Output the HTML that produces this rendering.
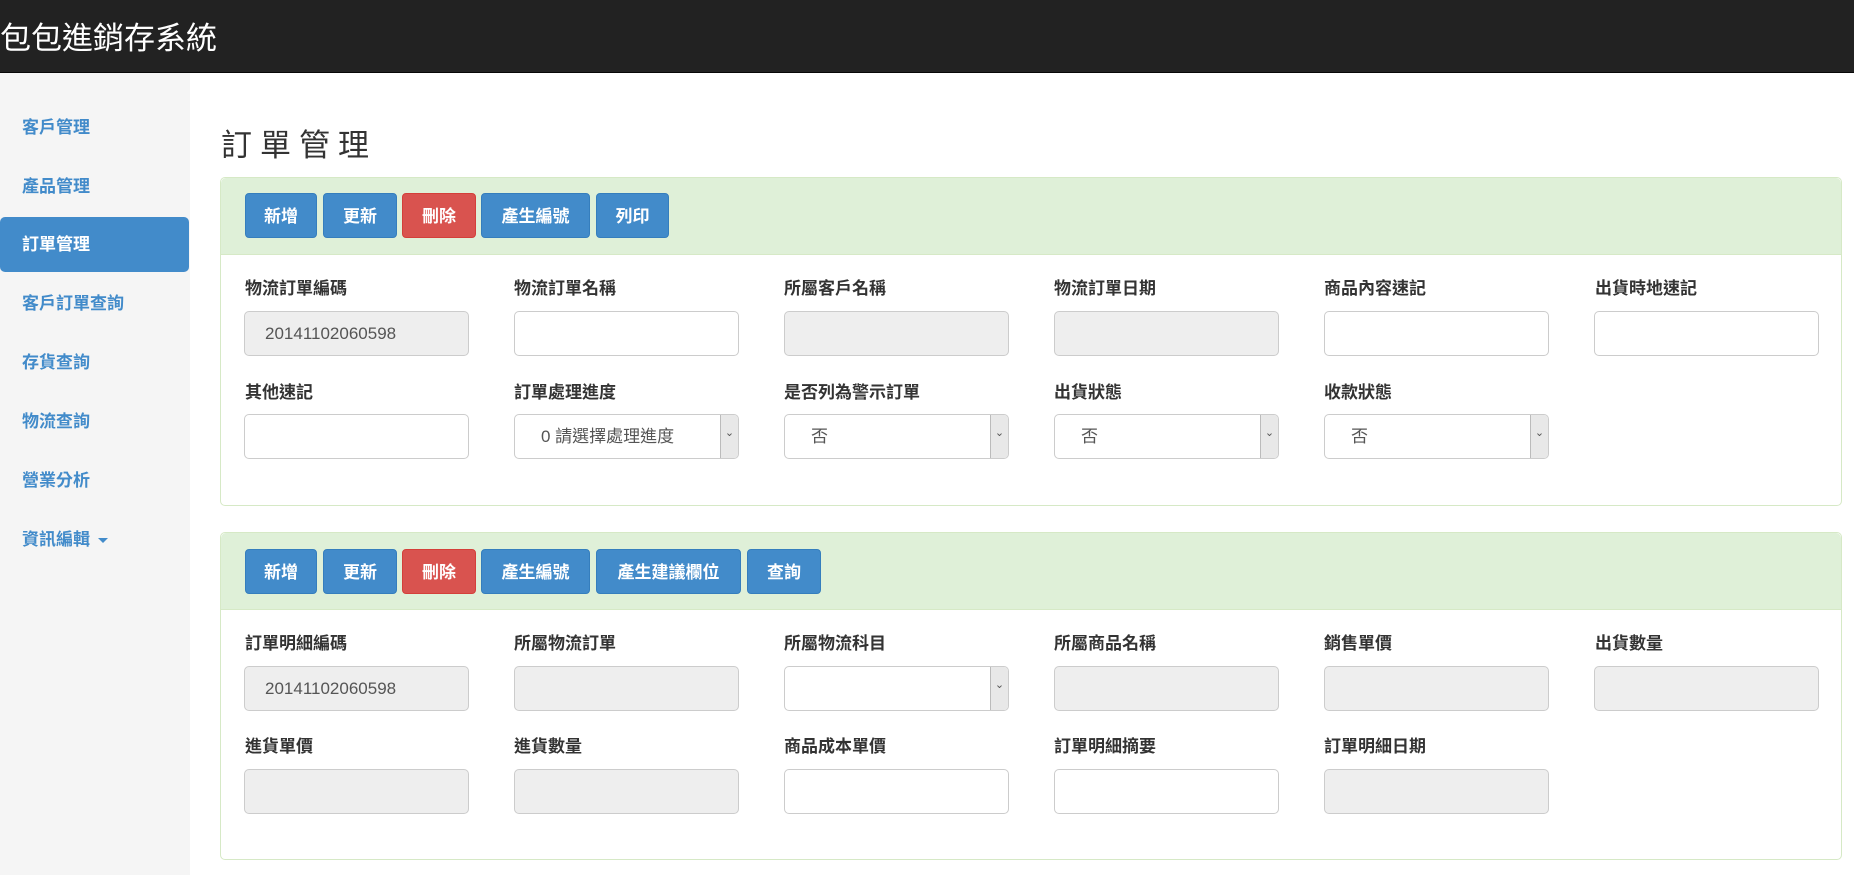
<!DOCTYPE html>
<html><head><meta charset="utf-8"><style>
*{box-sizing:border-box;margin:0;padding:0}
body{width:1854px;height:875px;overflow:hidden;background:#fff;font-family:"Liberation Sans","Noto Sans CJK TC",sans-serif;position:relative}
.nav{position:absolute;left:0;top:0;width:1854px;height:73px;background:#222;border-bottom:1px solid #080808}
.nav span{position:absolute;left:0;top:19px;color:#fff;font-size:31px;line-height:40px}
.side{position:absolute;left:0;top:73px;width:190px;height:802px;background:#f5f5f5}
.side a{position:absolute;left:0;width:189px;height:55px;line-height:55px;padding-left:22px;color:#428bca;font-size:17px;font-weight:bold;border-radius:5px}
.side a.act{background:#428bca;color:#fff}
.caret{display:inline-block;width:0;height:0;border-left:5px solid transparent;border-right:5px solid transparent;border-top:5px solid #428bca;margin-left:8px;vertical-align:middle}
h1{position:absolute;left:221px;top:126px;font-size:31px;font-weight:normal;letter-spacing:8px;color:#333;line-height:40px}
.panel{position:absolute;left:220px;width:1622px;border:1px solid #d6e9c6;border-radius:5px;background:#fff}
.ph{height:77px;background:#dff0d8;border-bottom:1px solid #d6e9c6;border-radius:5px 5px 0 0}
.btn{position:absolute;height:45px;line-height:45px;text-align:center;color:#fff;font-size:17px;font-weight:bold;background:#428bca;border:1px solid #357ebd;border-radius:4px}
.btn.r{background:#d9534f;border-color:#d43f3a}
.lbl{position:absolute;font-size:17px;font-weight:bold;color:#333;line-height:20px}
.in{position:absolute;width:225px;height:45px;border:1px solid #ccc;border-radius:5px;background:#fff;font-size:17px;color:#555;line-height:43px;padding-left:26px}
.in.d{background:#eee}
.in.s:after{content:"⌄";position:absolute;right:0;top:0;width:17px;height:43px;background:#e8e8e8;border-left:1px solid #bbb;font-size:11px;text-align:center;line-height:36px;color:#555;border-radius:0 4px 4px 0}
</style></head><body>
<div class="nav"><span>包包進銷存系統</span></div>
<div class="side">
<a style="top:27px">客戶管理</a>
<a style="top:86px">產品管理</a>
<a class="act" style="top:144px">訂單管理</a>
<a style="top:203px">客戶訂單查詢</a>
<a style="top:262px">存貨查詢</a>
<a style="top:321px">物流查詢</a>
<a style="top:380px">營業分析</a>
<a style="top:439px">資訊編輯<span class="caret"></span></a>
</div>
<h1>訂單管理</h1>

<div class="panel" style="top:177px;height:329px"><div class="ph"></div></div>
<div class="btn" style="left:245px;top:193px;width:72px">新增</div>
<div class="btn" style="left:323px;top:193px;width:74px">更新</div>
<div class="btn r" style="left:402px;top:193px;width:74px">刪除</div>
<div class="btn" style="left:481px;top:193px;width:109px">產生編號</div>
<div class="btn" style="left:596px;top:193px;width:73px">列印</div>

<div class="lbl" style="left:245px;top:279px">物流訂單編碼</div>
<div class="lbl" style="left:514px;top:279px">物流訂單名稱</div>
<div class="lbl" style="left:784px;top:279px">所屬客戶名稱</div>
<div class="lbl" style="left:1054px;top:279px">物流訂單日期</div>
<div class="lbl" style="left:1324px;top:279px">商品內容速記</div>
<div class="lbl" style="left:1595px;top:279px">出貨時地速記</div>
<div class="in d" style="left:244px;top:311px;padding-left:20px">20141102060598</div>
<div class="in" style="left:514px;top:311px"></div>
<div class="in d" style="left:784px;top:311px"></div>
<div class="in d" style="left:1054px;top:311px"></div>
<div class="in" style="left:1324px;top:311px"></div>
<div class="in" style="left:1594px;top:311px"></div>

<div class="lbl" style="left:245px;top:383px">其他速記</div>
<div class="lbl" style="left:514px;top:383px">訂單處理進度</div>
<div class="lbl" style="left:784px;top:383px">是否列為警示訂單</div>
<div class="lbl" style="left:1054px;top:383px">出貨狀態</div>
<div class="lbl" style="left:1324px;top:383px">收款狀態</div>
<div class="in" style="left:244px;top:414px"></div>
<div class="in s" style="left:514px;top:414px">0 請選擇處理進度</div>
<div class="in s" style="left:784px;top:414px">否</div>
<div class="in s" style="left:1054px;top:414px">否</div>
<div class="in s" style="left:1324px;top:414px">否</div>

<div class="panel" style="top:532px;height:328px"><div class="ph"></div></div>
<div class="btn" style="left:245px;top:549px;width:72px">新增</div>
<div class="btn" style="left:323px;top:549px;width:74px">更新</div>
<div class="btn r" style="left:402px;top:549px;width:74px">刪除</div>
<div class="btn" style="left:481px;top:549px;width:109px">產生編號</div>
<div class="btn" style="left:596px;top:549px;width:145px">產生建議欄位</div>
<div class="btn" style="left:747px;top:549px;width:74px">查詢</div>

<div class="lbl" style="left:245px;top:634px">訂單明細編碼</div>
<div class="lbl" style="left:514px;top:634px">所屬物流訂單</div>
<div class="lbl" style="left:784px;top:634px">所屬物流科目</div>
<div class="lbl" style="left:1054px;top:634px">所屬商品名稱</div>
<div class="lbl" style="left:1324px;top:634px">銷售單價</div>
<div class="lbl" style="left:1595px;top:634px">出貨數量</div>
<div class="in d" style="left:244px;top:666px;padding-left:20px">20141102060598</div>
<div class="in d" style="left:514px;top:666px"></div>
<div class="in s" style="left:784px;top:666px"></div>
<div class="in d" style="left:1054px;top:666px"></div>
<div class="in d" style="left:1324px;top:666px"></div>
<div class="in d" style="left:1594px;top:666px"></div>

<div class="lbl" style="left:245px;top:737px">進貨單價</div>
<div class="lbl" style="left:514px;top:737px">進貨數量</div>
<div class="lbl" style="left:784px;top:737px">商品成本單價</div>
<div class="lbl" style="left:1054px;top:737px">訂單明細摘要</div>
<div class="lbl" style="left:1324px;top:737px">訂單明細日期</div>
<div class="in d" style="left:244px;top:769px"></div>
<div class="in d" style="left:514px;top:769px"></div>
<div class="in" style="left:784px;top:769px"></div>
<div class="in" style="left:1054px;top:769px"></div>
<div class="in d" style="left:1324px;top:769px"></div>
</body></html>
